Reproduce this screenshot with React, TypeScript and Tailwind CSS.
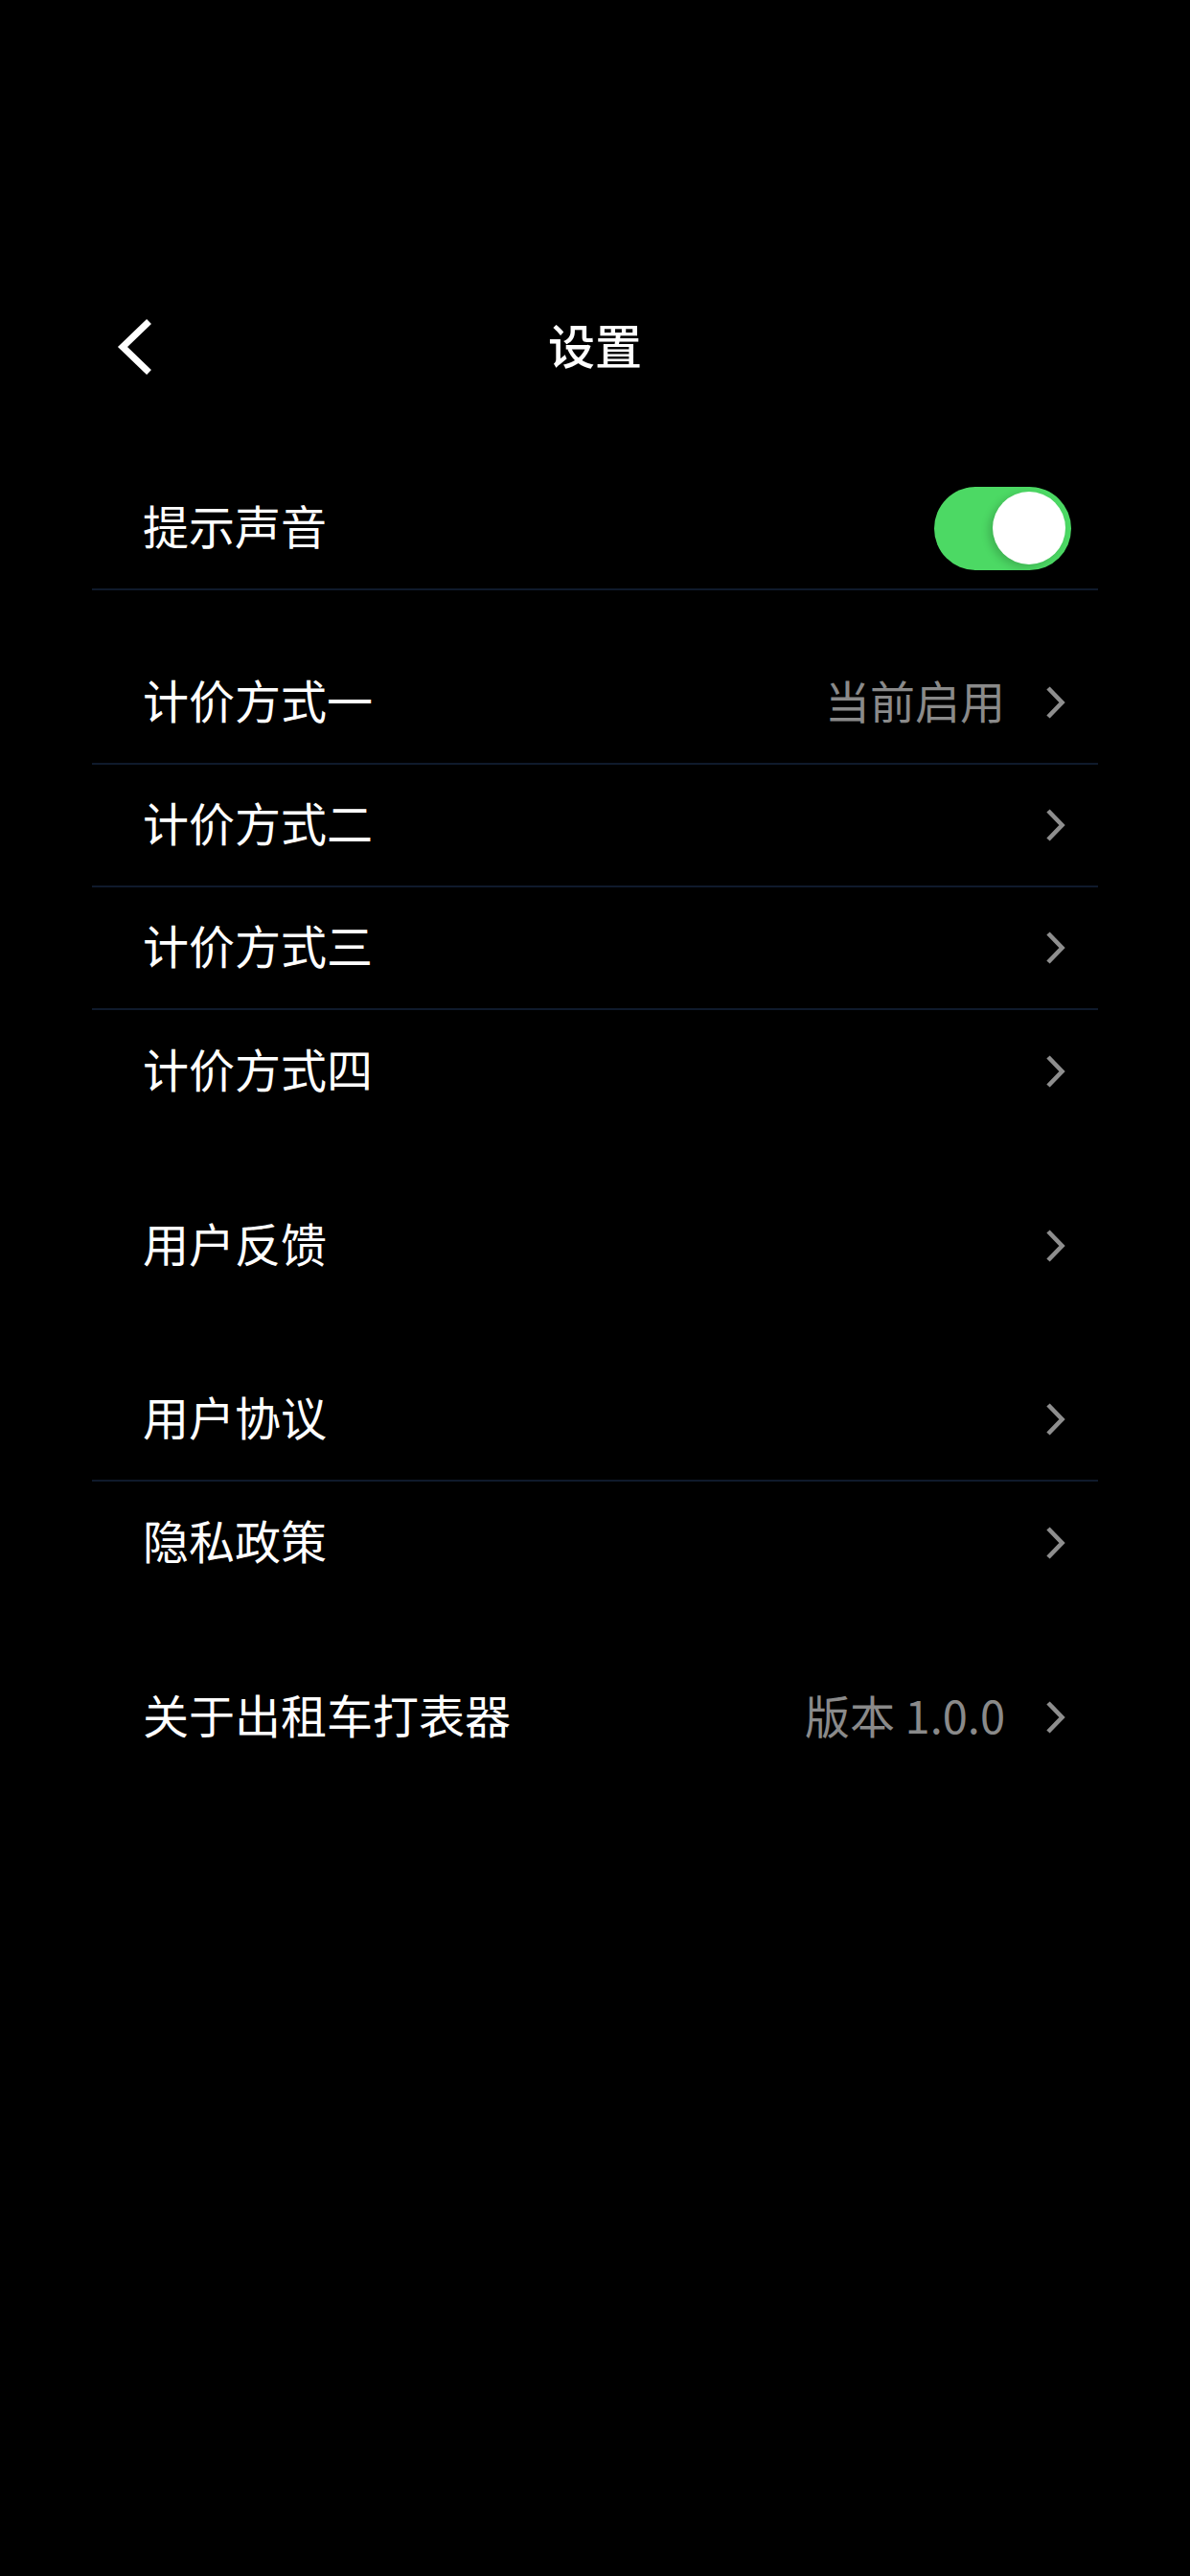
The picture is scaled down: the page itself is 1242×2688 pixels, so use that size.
import type { ReactNode } from 'react';

const FONT = '"Noto Sans CJK SC", "Noto Sans", sans-serif';

function Chevron() {
  return (
    <svg width="24" height="36" viewBox="0 0 24 36" className="shrink-0">
      <polyline
        points="4,3 18.5,18 4,33"
        fill="none"
        stroke="#8e8e8e"
        strokeWidth="4.6"
        strokeLinecap="butt"
        strokeLinejoin="miter"
      />
    </svg>
  );
}

function BackIcon() {
  return (
    <svg width="44" height="64" viewBox="0 0 44 64">
      <polyline
        points="33,9 8,33 33,57"
        fill="none"
        stroke="#ffffff"
        strokeWidth="7"
        strokeLinecap="square"
        strokeLinejoin="miter"
      />
    </svg>
  );
}

function Toggle({ on }: { on: boolean }) {
  return (
    <div
      className={`flex h-[87px] w-[143px] items-center rounded-full px-[6px] ${
        on ? 'justify-end bg-[#4cd964]' : 'justify-start bg-[#3a3a3c]'
      }`}
    >
      <div className="h-[76px] w-[76px] rounded-full bg-white shadow-[-4px_3px_8px_rgba(0,0,0,0.18)]" />
    </div>
  );
}

// Una fila de ajustes. El divisor se pinta abajo salvo en la ultima del grupo.
function Row({
  label,
  value,
  right,
  divider,
}: {
  label: string;
  value?: string;
  right?: ReactNode;
  divider: boolean;
}) {
  return (
    <div
      className={`flex h-[128px] items-center justify-between pl-[53px] pr-[28px] ${
        divider ? 'border-b-2 border-[#0f1a2c]' : ''
      }`}
    >
      <span className="pb-[8px] text-[48px] leading-none text-white">{label}</span>
      {right ?? (
        <div className="flex items-center gap-[41px] pr-[4px]">
          {value && (
            <span className="pb-[8px] text-[47px] leading-none text-[#8a8a8a]">
              {value}
            </span>
          )}
          <Chevron />
        </div>
      )}
    </div>
  );
}

type Item = { label: string; value?: string };

function Group({ items }: { items: Item[] }) {
  return (
    <div className="flex flex-col">
      {items.map((it, i) => (
        <Row
          key={it.label}
          label={it.label}
          value={it.value}
          divider={i < items.length - 1}
        />
      ))}
    </div>
  );
}

export default function App() {
  return (
    <div
      className="min-h-[2688px] w-[1242px] bg-black pt-[300px]"
      style={{ fontFamily: FONT }}
    >
      <div className="flex h-[122px] items-center px-[120px]">
        <div className="flex w-[116px] items-center">
          <BackIcon />
        </div>
        <div className="flex-1 pb-[6px] text-center text-[49px] font-medium leading-none text-white">
          设置
        </div>
        <div className="w-[116px]" />
      </div>

      <div className="mx-[96px] mt-[66px] flex flex-col gap-[54px]">
        <Row label="提示声音" right={<Toggle on />} divider />
        <Group
          items={[
            { label: '计价方式一', value: '当前启用' },
            { label: '计价方式二' },
            { label: '计价方式三' },
            { label: '计价方式四' },
          ]}
        />
        <Group items={[{ label: '用户反馈' }]} />
        <Group items={[{ label: '用户协议' }, { label: '隐私政策' }]} />
        <Group items={[{ label: '关于出租车打表器', value: '版本 1.0.0' }]} />
      </div>
    </div>
  );
}
